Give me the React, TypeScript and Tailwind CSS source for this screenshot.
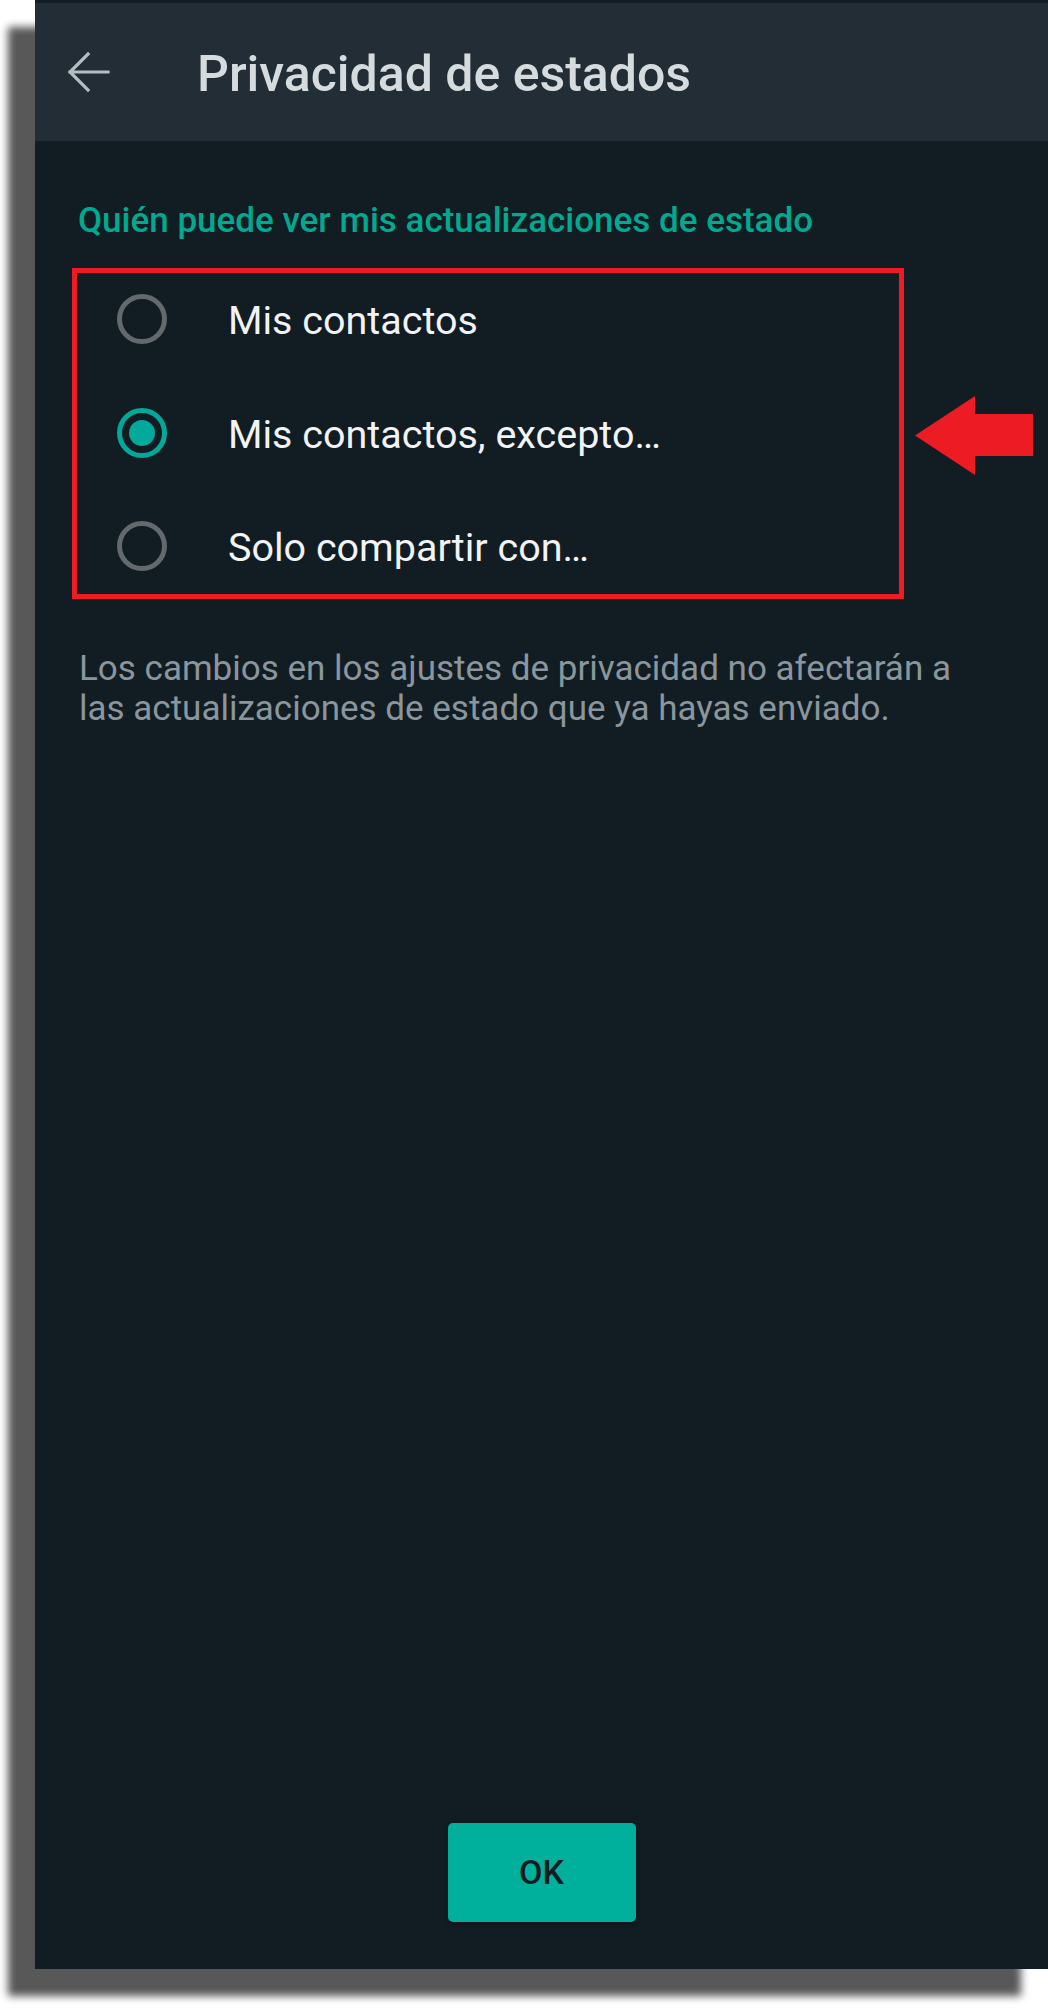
import React from 'react';

const options = [
  { id: 'contacts', label: 'Mis contactos' },
  { id: 'except', label: 'Mis contactos, excepto…' },
  { id: 'only', label: 'Solo compartir con…' },
];

function Radio({ checked }: { checked: boolean }) {
  return (
    <span
      className={`flex h-[50px] w-[50px] shrink-0 items-center justify-center rounded-full border-[5px] ${
        checked ? 'border-[#00a99a]' : 'border-[#63696d]'
      }`}
    >
      {checked && <span className="h-[26px] w-[26px] rounded-full bg-[#00a99a]" />}
    </span>
  );
}

export default function App() {
  const selected = 'except';

  return (
    <div className="h-[2010px] w-[1048px] overflow-hidden bg-white font-['Roboto',sans-serif]">
      <div className="relative ml-[35px] flex h-[1969px] w-[1013px] flex-col bg-[#121c23] shadow-[-27px_27px_8px_#585858]">
        {/* status bar sliver */}
        <div className="h-[3px] bg-[#121c23]" />

        {/* Header */}
        <div className="flex h-[138px] items-center bg-[#232d36]">
          <svg
            className="ml-[31px] h-[44px] w-[44px]"
            viewBox="0 0 44 44"
            fill="none"
            stroke="#b4bdc2"
            strokeWidth="3.2"
            strokeLinecap="square"
          >
            <path d="M4 22h38M22 4 4 22l18 18" />
          </svg>
          <h1 className="ml-[87px] pt-[4px] text-[50px] font-medium leading-none text-[#d6dbde]">
            Privacidad de estados
          </h1>
        </div>

        {/* Body */}
        <div className="flex flex-1 flex-col px-[43px]">
          <p className="mt-[59px] text-[35px] font-medium leading-[41px] text-[#00a98f]">
            Quién puede ver mis actualizaciones de estado
          </p>

          <div className="ml-[-6px] mt-[27px] flex h-[331px] w-[832px] flex-col gap-[21.5px] border-[5px] border-[#ed1c24]">
            {options.map((opt) => (
              <div key={opt.id} className="flex h-[92px] items-center">
                <span className="ml-[40px]">
                  <Radio checked={opt.id === selected} />
                </span>
                <span className="ml-[61px] pt-[4px] text-[39.5px] leading-none text-[#f1f3f4]">
                  {opt.label}
                </span>
              </div>
            ))}
          </div>

          <p className="ml-[1px] mt-[50px] text-[35px] leading-[40px] text-[#8a969d]">
            Los cambios en los ajustes de privacidad no afectarán a
            <br />
            las actualizaciones de estado que ya hayas enviado.
          </p>

          <div className="flex-1" />

          <div className="mb-[47px] flex justify-center">
            <button className="h-[99px] w-[188px] rounded-[5px] bg-[#00af9c] text-[34px] font-medium text-[#111b21] shadow-[0_2px_4px_rgba(0,0,0,0.35)]">
              OK
            </button>
          </div>
        </div>

        {/* annotation arrow */}
        <svg
          className="absolute left-[880px] top-[396px] h-[79px] w-[118px]"
          viewBox="0 0 118 79"
        >
          <polygon points="0,39.5 60,0 60,18 118,18 118,60 60,60 60,79" fill="#ed1c24" />
        </svg>
      </div>
    </div>
  );
}
